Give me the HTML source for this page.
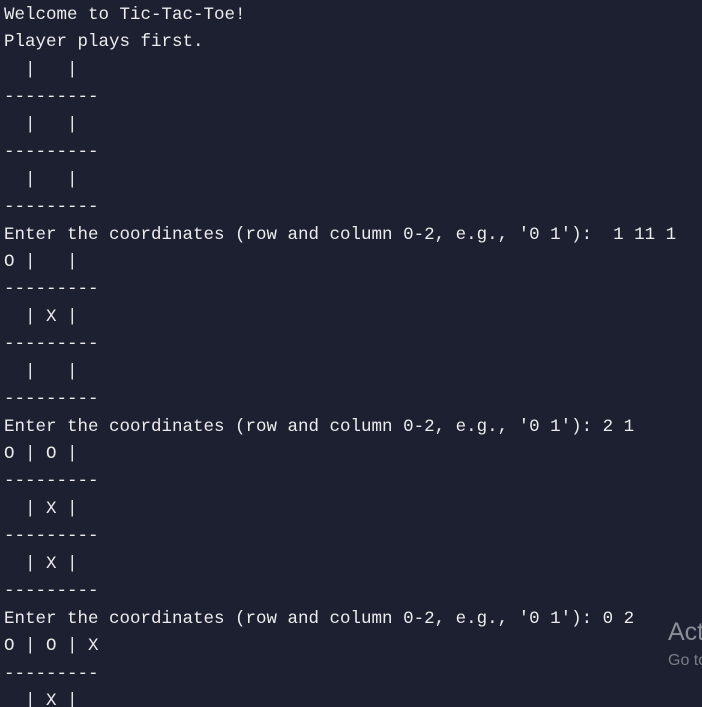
<!DOCTYPE html>
<html><head><meta charset="utf-8"><style>
html,body{margin:0;padding:0;background:#1c2030;width:702px;height:707px;overflow:hidden;position:relative;}
pre{margin:0;padding:2px 0 0 4px;font-family:"Liberation Mono",monospace;font-size:17.5px;line-height:27.44px;color:#ececec;}
.w{position:absolute;left:668px;top:618px;width:34px;height:60px;overflow:hidden;}
.a1{position:absolute;left:0;top:0;font-family:"Liberation Sans",sans-serif;color:#8a8d96;font-size:25px;white-space:nowrap;}
.a2{position:absolute;left:0;top:34px;font-family:"Liberation Sans",sans-serif;color:#7a7d86;font-size:16px;white-space:nowrap;}
</style></head><body>
<pre>Welcome to Tic-Tac-Toe!
Player plays first.
  |   |
---------
  |   |
---------
  |   |
---------
Enter the coordinates (row and column 0-2, e.g., '0 1'):  1 11 1
O |   |
---------
  | X |
---------
  |   |
---------
Enter the coordinates (row and column 0-2, e.g., '0 1'): 2 1
O | O |
---------
  | X |
---------
  | X |
---------
Enter the coordinates (row and column 0-2, e.g., '0 1'): 0 2
O | O | X
---------
  | X |</pre>
<div class="w"><div class="a1">Activate Windows</div>
<div class="a2">Go to Settings to activate Windows.</div></div>
</body></html>
